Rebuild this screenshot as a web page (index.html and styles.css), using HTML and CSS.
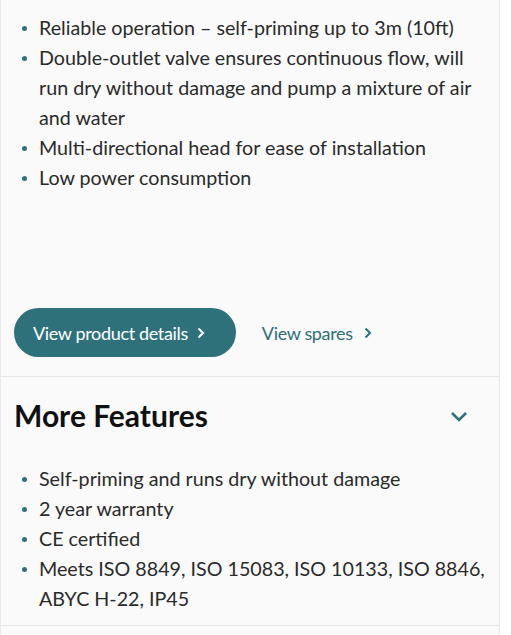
FILE: index.html
```html
<!DOCTYPE html>
<html lang="en">
<head>
    <meta charset="UTF-8">
    <meta name="viewport" content="width=device-width, initial-scale=1.0">
    <title>Pump Features</title>
    <link rel="stylesheet" href="styles.css">
</head>
<body>
    <div class="panel">
        <div class="section">
            <ul class="feature-list">
                <li>Reliable operation – self-priming up to 3m (10ft)</li>
                <li>Double-outlet valve ensures continuous flow, will run dry without damage and pump a mixture of air and water</li>
                <li>Multi-directional head for ease of installation</li>
                <li>Low power consumption</li>
            </ul>

            <div class="actions">
                <a href="#" class="details-button">View product details
                    <svg class="chev" width="10" height="12" viewBox="0 0 10 12"><path d="M2.5 1.5 L7 6 L2.5 10.5" fill="none" stroke="currentColor" stroke-width="2"/></svg>
                </a>
                <a href="#" class="spares-link">View spares
                    <svg class="chev" width="10" height="12" viewBox="0 0 10 12"><path d="M2.5 1.5 L7 6 L2.5 10.5" fill="none" stroke="currentColor" stroke-width="2"/></svg>
                </a>
            </div>
        </div>

        <div class="section more">
            <div class="more-header">
                <h2>More Features</h2>
                <svg class="toggle" width="18" height="12" viewBox="0 0 18 12"><path d="M2 2 L9 9 L16 2" fill="none" stroke="currentColor" stroke-width="2.6"/></svg>
            </div>
            <ul class="feature-list">
                <li>Self-priming and runs dry without damage</li>
                <li>2 year warranty</li>
                <li>CE certified</li>
                <li>Meets ISO 8849, ISO 15083, ISO 10133, ISO 8846, ABYC H-22, IP45</li>
            </ul>
        </div>
        <div class="section next"></div>
    </div>
</body>
</html>
```

FILE: styles.css
```css
body {
    margin: 0;
    background-color: #fff;
    font-family: Lato, "Open Sans", sans-serif;
    color: #222;
}
.panel {
    width: 498px;
    background-color: #fafafa;
    border-left: 1px solid #e9e9e9;
    border-right: 1px solid #e9e9e9;
}
.section {
    padding: 13px 8px 19px 13px;
    border-bottom: 1px solid #e6e6e6;
}
.feature-list {
    margin: 0;
    padding-left: 25px;
    list-style: none;
    font-size: 19.7px;
    line-height: 30px;
    color: #2a2a2a;
}
.feature-list li {
    position: relative;
}
.feature-list li::before {
    content: "";
    position: absolute;
    left: -17px;
    top: 13px;
    width: 5px;
    height: 5px;
    border-radius: 50%;
    background-color: #2f717b;
}
.actions {
    display: flex;
    align-items: center;
    gap: 26px;
    margin-top: 115px;
}
.details-button {
    display: inline-flex;
    align-items: center;
    gap: 8px;
    height: 49px;
    padding: 0 30px 0 19px;
    border-radius: 25px;
    background-color: #2f717b;
    color: #fff;
    font-size: 18px;
    letter-spacing: -0.35px;
    text-decoration: none;
}
.spares-link {
    display: inline-flex;
    align-items: center;
    gap: 10px;
    color: #2f6f79;
    font-size: 18px;
    letter-spacing: -0.35px;
    text-decoration: none;
}
.more {
    padding-top: 21px;
    padding-bottom: 11px;
}
.more-header {
    display: flex;
    align-items: center;
    justify-content: space-between;
    margin-bottom: 32px;
}
.more-header h2 {
    margin: 0;
    font-size: 30px;
    font-weight: 700;
    line-height: 34px;
    color: #111;
}
.toggle {
    color: #2f717b;
    margin-right: 23px;
    margin-top: 4px;
}
.next {
    height: 20px;
    border-bottom: none;
}
```
